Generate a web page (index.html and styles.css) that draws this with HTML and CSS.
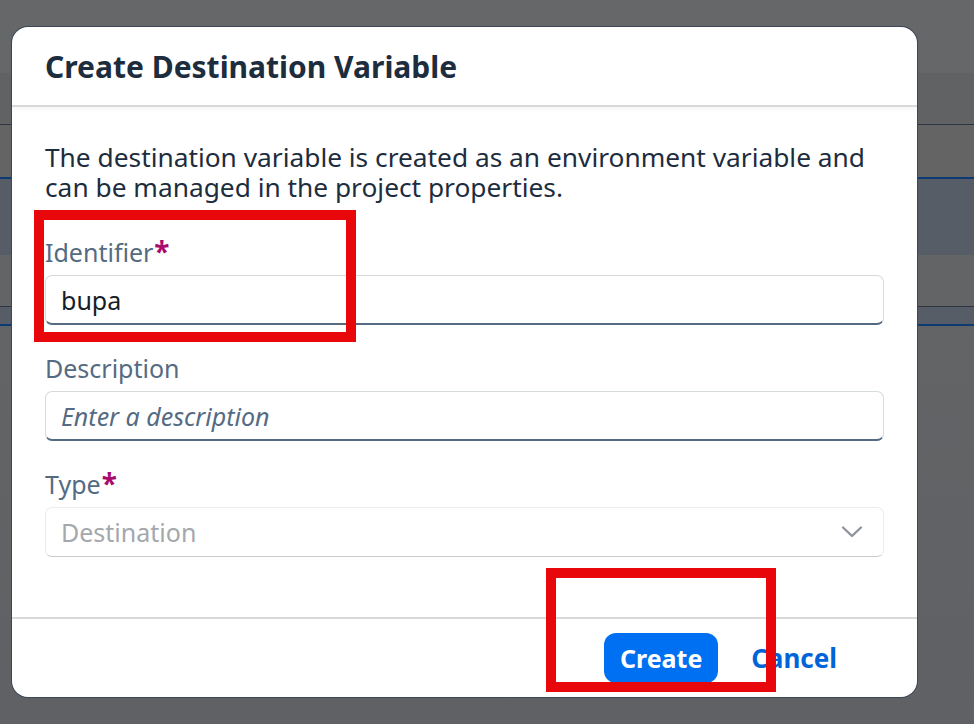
FILE: index.html
```html
<!DOCTYPE html>
<html lang="en">
<head>
<meta charset="utf-8">
<title>Create Destination Variable</title>
<link rel="stylesheet" href="styles.css">
</head>
<body>
<div class="backdrop">
  <div class="band band-top"></div>
  <div class="band band-toolbar"></div>
  <div class="rule rule-dark"></div>
  <div class="band band-row"></div>
  <div class="rule rule-blue"></div>
  <div class="band band-sel"></div>
  <div class="band band-row2"></div>
  <div class="rule rule-dark"></div>
  <div class="band band-sel2"></div>
  <div class="rule rule-blue"></div>
  <div class="band band-rest"></div>
</div>

<section class="dialog" role="dialog" aria-labelledby="dlg-title">
  <header class="dialog-header">
    <h1 id="dlg-title" class="dialog-title">Create Destination Variable</h1>
  </header>
  <div class="dialog-body">
    <p class="intro">The destination variable is created as an environment variable and can be managed in the project properties.</p>
    <div class="field">
      <label class="field-label" for="f-id">Identifier<span class="req">*</span></label>
      <div class="input"><span class="input-value" id="f-id">bupa</span></div>
    </div>
    <div class="field">
      <label class="field-label" for="f-desc">Description</label>
      <div class="input"><span class="input-placeholder" id="f-desc">Enter a description</span></div>
    </div>
    <div class="field">
      <label class="field-label" for="f-type">Type<span class="req">*</span></label>
      <div class="input input-disabled">
        <span class="input-disabled-text" id="f-type">Destination</span>
        <svg class="chevron" width="22" height="14" viewBox="0 0 22 14" aria-hidden="true">
          <path d="M2 2.5 L11 11 L20 2.5" fill="none" stroke="#8d949c" stroke-width="2.4" stroke-linecap="round" stroke-linejoin="round"/>
        </svg>
      </div>
    </div>
  </div>
  <footer class="dialog-footer">
    <button class="btn btn-primary" type="button">Create</button>
    <button class="btn btn-ghost" type="button">Cancel</button>
  </footer>
</section>

<div class="mark mark-identifier"></div>
<div class="mark mark-create"></div>
</body>
</html>
```

FILE: styles.css
```css
* { box-sizing: border-box; }

html, body {
  margin: 0;
  padding: 0;
  width: 974px;
  height: 724px;
  overflow: hidden;
  font-family: "Noto Sans", "Open Sans", Arial, sans-serif;
}

body {
  position: relative;
  background: #606164;
}

.backdrop {
  display: flex;
  flex-direction: column;
  height: 724px;
}

.band-top { height: 73px; background: #666768; }
.band-toolbar { height: 51px; background: #616263; }
.rule-dark { height: 1px; background: #2d3540; }
.band-row { height: 52px; background: #646465; }
.rule-blue { height: 2px; background: #0e3a73; }
.band-sel { height: 76px; background: #565d66; }
.band-row2 { height: 51px; background: #636465; }
.band-sel2 { height: 17px; background: #565d66; }
.band-rest { flex: 1; background: linear-gradient(180deg, #636466 0%, #5f6164 100%); }

.dialog {
  position: absolute;
  left: 12px;
  top: 27px;
  width: 905px;
  height: 670px;
  background: #ffffff;
  border-radius: 16px;
  box-shadow: 0 0 0 1px #3d4857;
  display: flex;
  flex-direction: column;
  color: #1d2d3e;
}

.dialog-header {
  height: 80px;
  padding: 0 33px;
  display: flex;
  align-items: center;
  border-bottom: 2px solid #d9d9d9;
  box-shadow: 0 3px 4px rgba(0, 0, 0, 0.04);
}

.dialog-title {
  margin: 0;
  font-size: 30px;
  line-height: 36px;
  font-weight: 700;
  color: #1d2d3e;
  padding-top: 2px;
}

.dialog-body {
  flex: 1;
  padding: 35px 33px 0 33px;
  display: flex;
  flex-direction: column;
}

.intro {
  margin: 0 0 35px 0;
  font-size: 26.3px;
  line-height: 30px;
  color: #1d2d3e;
}

.field {
  display: flex;
  flex-direction: column;
  gap: 8px;
  margin-bottom: 28px;
}

.field-label {
  font-size: 25px;
  line-height: 30px;
  height: 30px;
  color: #556b82;
}

.req {
  color: #aa0a6c;
  font-weight: 700;
  font-size: 28px;
  line-height: 0;
  margin-left: 1px;
}

.input {
  height: 50px;
  flex: 0 0 50px;
  border: 1px solid #d5dadd;
  border-bottom: 2px solid #556b82;
  border-radius: 7px;
  padding: 0 15px;
  display: flex;
  align-items: center;
  font-size: 25px;
}

.input-value { color: #131e29; }

.input-placeholder {
  color: #556b82;
  font-style: italic;
}

.input-disabled {
  border: 1px solid #ececec;
  border-bottom: 1px solid #c8ccd1;
  justify-content: space-between;
  padding-right: 20px;
}

.input-disabled-text { color: #a4a8ad; }

.chevron { display: block; }

.dialog-footer {
  height: 80px;
  border-top: 2px solid #d9d9d9;
  display: flex;
  align-items: center;
  justify-content: flex-end;
  padding: 0 64px 0 0;
  gap: 17px;
}

.btn {
  font-family: inherit;
  font-size: 25px;
  font-weight: 700;
  height: 50px;
  border: 0;
  border-radius: 12px;
  padding: 0 16px;
  cursor: pointer;
}

.btn-primary {
  background: #0070f2;
  color: #ffffff;
  width: 114px;
  padding: 0;
}

.btn-ghost {
  background: transparent;
  color: #0064d9;
  font-size: 26px;
}

.mark {
  position: absolute;
  border: 10px solid #e8070b;
  pointer-events: none;
}

.mark-identifier {
  left: 34px;
  top: 210px;
  width: 322px;
  height: 132px;
}

.mark-create {
  left: 546px;
  top: 568px;
  width: 230px;
  height: 124px;
}
```
